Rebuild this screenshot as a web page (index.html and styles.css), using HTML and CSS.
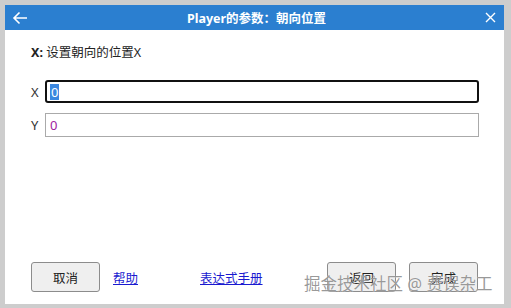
FILE: index.html
```html
<!DOCTYPE html>
<html lang="zh">
<head>
<meta charset="UTF-8">
<title>Player的参数</title>
<link rel="stylesheet" href="styles.css">
</head>
<body>
<div class="dialog">
  <div class="titlebar">
    <svg class="icon back" width="16" height="14" viewBox="0 0 16 14">
      <path d="M15 7H2M7.5 1.5L2 7l5.5 5.5" fill="none" stroke="#fff" stroke-width="1.6"/>
    </svg>
    <span class="title">Player的参数：朝向位置</span>
    <svg class="icon close" width="11" height="11" viewBox="0 0 11 11">
      <path d="M1 1l9 9M10 1l-9 9" fill="none" stroke="#fff" stroke-width="1.4"/>
    </svg>
  </div>
  <div class="content">
    <p class="desc"><b>X:</b> 设置朝向的位置X</p>
    <div class="fields">
      <div class="field">
        <span class="label">X</span>
        <div class="input focused"><span class="sel">0</span></div>
      </div>
      <div class="field">
        <span class="label">Y</span>
        <div class="input"><span class="val">0</span></div>
      </div>
    </div>
  </div>
  <div class="footer">
    <button class="btn">取消</button>
    <a class="link help" href="#">帮助</a>
    <a class="link manual" href="#">表达式手册</a>
    <span class="spacer"></span>
    <button class="btn">返回</button>
    <button class="btn">完成</button>
  </div>
  <div class="watermark">掘金技术社区 @ 费误杂工</div>
</div>
</body>
</html>
```

FILE: styles.css
```css
body {
margin: 0;
background: #cdcdcd;
font-family: "Noto Sans", "Noto Sans CJK SC", sans-serif;
color: #222;
}
.dialog {
position: relative;
margin: 5px 0 0 5px;
width: 499px;
height: 299px;
background: #fff;
display: flex;
flex-direction: column;
}
.titlebar {
height: 25px;
background: #2b7fd0;
color: #fff;
display: flex;
align-items: center;
padding: 0 8px 0 7px;
}
.title {
flex: 1;
text-align: center;
font-size: 12.5px;
font-weight: 700;
}
.back {
margin-top: 1px;
}
.content {
padding: 0 25px 0 26px;
flex: 1;
}
.desc {
margin: 14px 0 0 0;
font-size: 12.5px;
line-height: 17px;
}
.desc b {
font-weight: 700;
}
.fields {
margin-top: 19px;
display: flex;
flex-direction: column;
gap: 10px;
}
.field {
display: flex;
align-items: center;
}
.label {
width: 14px;
font-size: 13px;
color: #333;
}
.input {
flex: 1;
height: 22px;
border: 1px solid #aaa;
display: flex;
align-items: center;
padding-left: 4px;
font-size: 13px;
}
.input.focused {
height: 19px;
border: 2px solid #111;
border-radius: 3px;
padding-left: 3px;
}
.sel {
background: #3a87e0;
color: #fff;
line-height: 16px;
padding: 0 1px;
}
.val {
color: #a0229f;
}
.footer {
display: flex;
align-items: center;
padding: 0 26px 12px 26px;
}
.btn {
width: 69px;
height: 30px;
background: #efefef;
border: 1px solid #8c8c8c;
border-radius: 3px;
font-family: inherit;
font-size: 12.5px;
color: #222;
padding: 0;
}
.btn + .btn {
margin-left: 13px;
}
.link {
color: #1a1ad0;
font-size: 12.5px;
text-decoration: underline;
}
.help {
margin-left: 13px;
}
.manual {
margin-left: 62px;
}
.spacer {
flex: 1;
}
.watermark {
position: absolute;
left: 299px;
top: 266px;
font-size: 16.5px;
color: rgba(120, 120, 120, 0.75);
white-space: nowrap;
text-shadow: 0 0 1px #fff;
}
```
